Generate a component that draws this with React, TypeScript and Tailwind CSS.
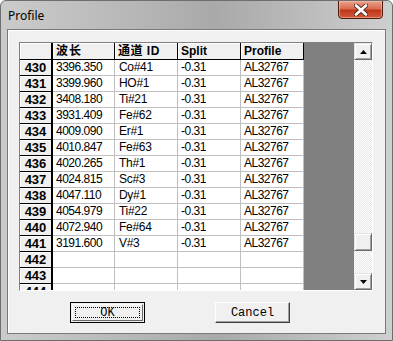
import React from "react";

const ROWS: [string, string, string][] = [
  ["430", "3396.350", "Co#41"],
  ["431", "3399.960", "HO#1"],
  ["432", "3408.180", "Ti#21"],
  ["433", "3931.409", "Fe#62"],
  ["434", "4009.090", "Er#1"],
  ["435", "4010.847", "Fe#63"],
  ["436", "4020.265", "Th#1"],
  ["437", "4024.815", "Sc#3"],
  ["438", "4047.110", "Dy#1"],
  ["439", "4054.979", "Ti#22"],
  ["440", "4072.940", "Fe#64"],
  ["441", "3191.600", "V#3"],
];

const EMPTY = ["442", "443", "444"];

const sans = { fontFamily: '"Liberation Sans", Arial, sans-serif' };

function Arrow({ down }: { down?: boolean }) {
  return (
    <svg width="7" height="4" viewBox="0 0 7 4">
      <polygon points={down ? "0,0 7,0 3.5,4" : "3.5,0 7,4 0,4"} fill="#000" />
    </svg>
  );
}

function ScrollButton({ down }: { down?: boolean }) {
  return (
    <div className="h-[17px] bg-[#f0f0f0] border-t border-l border-[#e3e3e3] border-r border-b border-r-[#696969] border-b-[#696969] shadow-[inset_1px_1px_0_#fff,inset_-1px_-1px_0_#a0a0a0] flex items-center justify-center">
      <Arrow down={down} />
    </div>
  );
}

function DataRow({ num, wave, ch }: { num: string; wave?: string; ch?: string }) {
  const filled = wave !== undefined;
  return (
    <div className="flex h-[16px] text-[12px] leading-[15px]">
      <div className="w-[33px] shrink-0 bg-[#f0f0f0] border-r-2 border-b border-black shadow-[inset_1px_1px_0_#fff] flex items-center justify-center font-bold text-[13px] text-black">
        {num}
      </div>
      <div className="w-[62px] shrink-0 bg-white border-r border-b border-[#c0c0c0] pl-[3px] tracking-[-0.5px]">
        {filled ? wave : ""}
      </div>
      <div className="w-[63px] shrink-0 bg-white border-r border-b border-[#c0c0c0] pl-[4px] tracking-[-0.3px]">
        {filled ? ch : ""}
      </div>
      <div className="w-[63px] shrink-0 bg-white border-r border-b border-[#c0c0c0] pl-[3px] tracking-[-0.5px]">
        {filled ? "-0.31" : ""}
      </div>
      <div className="w-[63px] shrink-0 bg-white border-r border-b border-[#c0c0c0] pl-[3px] tracking-[-0.5px]">
        {filled ? "AL32767" : ""}
      </div>
    </div>
  );
}

export default function App() {
  return (
    <div className="w-[393px] h-[341px] bg-white" style={sans}>
      <div className="w-[393px] h-[341px] flex flex-col rounded-t-[6px] border border-[#6e6e6e] bg-[linear-gradient(90deg,#cbcbcb_0%,#b9b9b9_30%,#a9a9a9_55%,#bdbdbd_80%,#cfcfcf_100%)] overflow-hidden">
        {/* Title bar */}
        <div className="h-[28px] flex items-start shrink-0">
          <span
            className="pl-[7px] pt-[6px] text-[12px] text-black"
            style={{ fontFamily: '"Noto Sans", "Open Sans", sans-serif' }}
          >
            Profile
          </span>
          <div className="ml-auto mr-[9px] -mt-px w-[45px] h-[19px] rounded-b-[4px] border border-[#4d1a10] bg-[linear-gradient(180deg,#eaa48f_0%,#d96b50_45%,#c0361b_55%,#d15a3c_100%)] shadow-[inset_0_0_0_1px_rgba(255,200,180,0.5)] flex items-center justify-center">
            <svg width="14" height="12" viewBox="0 0 14 12">
              <path d="M2 1.5 L12 10.5 M12 1.5 L2 10.5" stroke="#5a2a20" strokeWidth="4.4" strokeLinecap="round" />
              <path d="M2 1.5 L12 10.5 M12 1.5 L2 10.5" stroke="#fff" strokeWidth="2.6" strokeLinecap="round" />
            </svg>
          </div>
        </div>

        {/* Client area */}
        <div className="mx-[6px] h-[305px] shrink-0 border border-[#7a7a7a] bg-[#f0f0f0] shadow-[inset_1px_1px_0_#fff] pl-[11px] pt-[12px]">
          {/* Grid */}
          <div className="w-[354px] h-[249px] border-t border-l border-[#808080] border-r border-b border-r-white border-b-white flex overflow-hidden">
            <div className="w-[284px] shrink-0 flex flex-col overflow-hidden text-black">
              <div
                className="flex h-[17px] shrink-0 text-[12px] font-bold leading-[16px]"
                style={{ fontFamily: '"Liberation Sans", "Noto Sans CJK SC", sans-serif' }}
              >
                <div className="w-[33px] shrink-0 bg-[#f0f0f0] border-r-2 border-b border-black shadow-[inset_1px_1px_0_#fff]" />
                <div className="w-[62px] shrink-0 bg-[#f0f0f0] border-r border-b border-black shadow-[inset_1px_1px_0_#fff] pl-[3px] tracking-[1px]">
                  波长
                </div>
                <div className="w-[63px] shrink-0 bg-[#f0f0f0] border-r border-b border-black shadow-[inset_1px_1px_0_#fff] pl-[3px] tracking-[0.5px]">
                  通道 ID
                </div>
                <div className="w-[63px] shrink-0 bg-[#f0f0f0] border-r border-b border-black shadow-[inset_1px_1px_0_#fff] pl-[3px]">
                  Split
                </div>
                <div className="w-[63px] shrink-0 bg-[#f0f0f0] border-r border-b border-black shadow-[inset_1px_1px_0_#fff] pl-[3px]">
                  Profile
                </div>
              </div>
              {ROWS.map(([n, w, c]) => (
                <DataRow key={n} num={n} wave={w} ch={c} />
              ))}
              {EMPTY.map((n) => (
                <DataRow key={n} num={n} />
              ))}
            </div>
            <div className="w-[50px] shrink-0 bg-[#808080]" />
            <div className="w-[18px] shrink-0 flex flex-col bg-[image:repeating-conic-gradient(#ffffff_0%_25%,#e8e8e8_0%_50%)] bg-[length:2px_2px]">
              <ScrollButton />
              <div className="h-[173px] shrink-0" />
              <div className="h-[18px] shrink-0 bg-[#f0f0f0] border-t border-l border-[#e3e3e3] border-r border-b border-r-[#696969] border-b-[#696969] shadow-[inset_1px_1px_0_#fff,inset_-1px_-1px_0_#a0a0a0]" />
              <div className="flex-1" />
              <ScrollButton down />
            </div>
          </div>

          {/* Buttons */}
          <div
            className="flex mt-[11px] pl-[51px] gap-[70px] text-[12px] text-black"
            style={{ fontFamily: '"Liberation Mono", "DejaVu Sans Mono", monospace' }}
          >
            <div className="w-[75px] h-[21px] bg-[#f0f0f0] border border-black p-px">
              <div className="w-full h-full border-t border-l border-white border-r border-b border-r-[#696969] border-b-[#696969] p-[2px]">
                <div className="w-full h-full border border-dotted border-black flex items-center justify-center leading-none">
                  OK
                </div>
              </div>
            </div>
            <div className="w-[75px] h-[21px] bg-[#f0f0f0] border-t border-l border-white border-r border-b border-r-[#404040] border-b-[#404040] shadow-[inset_-1px_-1px_0_#a0a0a0] flex items-center justify-center leading-none">
              Cancel
            </div>
          </div>
        </div>
      </div>
    </div>
  );
}
